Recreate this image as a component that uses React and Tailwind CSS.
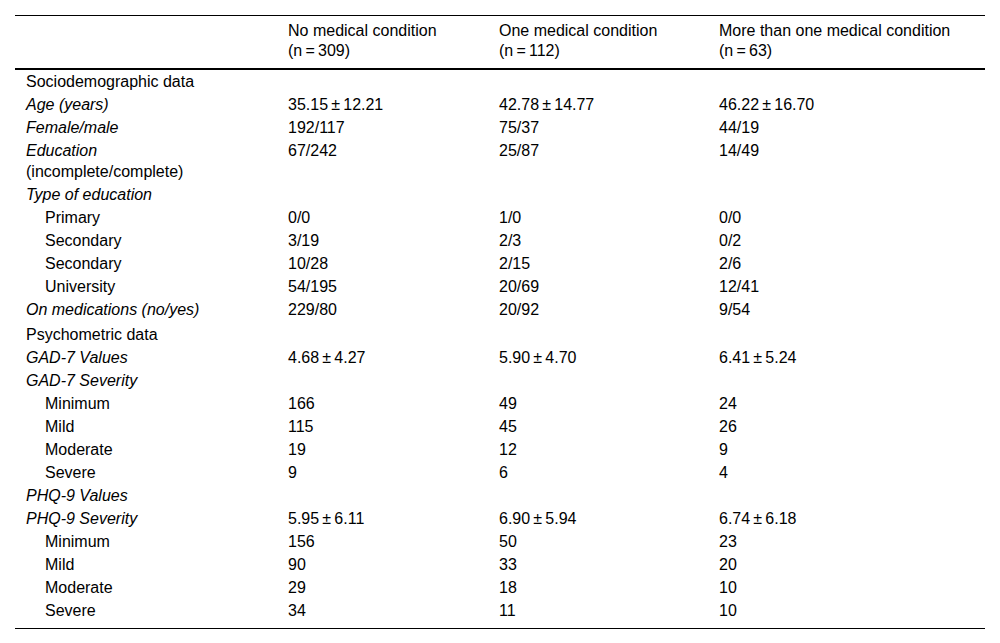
import React from "react";

// 표 데이터: [label, col1, col2, col3, 종류]
// kind: "section" = 구분 제목, "italic" = 기울임 항목, "sub" = 들여쓴 하위 항목
const pm = (a, b) => `${a}\u2009±\u2009${b}`;

const rows = [
    { label: "Sociodemographic data", kind: "section", cells: ["", "", ""] },
    { label: "Age (years)", kind: "italic", cells: [pm("35.15", "12.21"), pm("42.78", "14.77"), pm("46.22", "16.70")] },
    { label: "Female/male", kind: "italic", cells: ["192/117", "75/37", "44/19"] },
    { label: "Education", extra: "(incomplete/complete)", kind: "italic", cells: ["67/242", "25/87", "14/49"] },
    { label: "Type of education", kind: "italic", cells: ["", "", ""] },
    { label: "Primary", kind: "sub", cells: ["0/0", "1/0", "0/0"] },
    { label: "Secondary", kind: "sub", cells: ["3/19", "2/3", "0/2"] },
    { label: "Secondary", kind: "sub", cells: ["10/28", "2/15", "2/6"] },
    { label: "University", kind: "sub", cells: ["54/195", "20/69", "12/41"] },
    { label: "On medications (no/yes)", kind: "italic", cells: ["229/80", "20/92", "9/54"] },
    { label: "Psychometric data", kind: "section", gap: true, cells: ["", "", ""] },
    { label: "GAD-7 Values", kind: "italic", cells: [pm("4.68", "4.27"), pm("5.90", "4.70"), pm("6.41", "5.24")] },
    { label: "GAD-7 Severity", kind: "italic", cells: ["", "", ""] },
    { label: "Minimum", kind: "sub", cells: ["166", "49", "24"] },
    { label: "Mild", kind: "sub", cells: ["115", "45", "26"] },
    { label: "Moderate", kind: "sub", cells: ["19", "12", "9"] },
    { label: "Severe", kind: "sub", cells: ["9", "6", "4"] },
    { label: "PHQ-9 Values", kind: "italic", cells: ["", "", ""] },
    { label: "PHQ-9 Severity", kind: "italic", cells: [pm("5.95", "6.11"), pm("6.90", "5.94"), pm("6.74", "6.18")] },
    { label: "Minimum", kind: "sub", cells: ["156", "50", "23"] },
    { label: "Mild", kind: "sub", cells: ["90", "33", "20"] },
    { label: "Moderate", kind: "sub", cells: ["29", "18", "10"] },
    { label: "Severe", kind: "sub", cells: ["34", "11", "10"] },
];

const headers = [
    ["No medical condition", "(n\u2009=\u2009309)"],
    ["One medical condition", "(n\u2009=\u2009112)"],
    ["More than one medical condition", "(n\u2009=\u200963)"],
];

const App = () => {
    return (
        <div className="bg-white w-[1000px] h-[643px] p-[15px] text-black text-[16px] font-['Liberation_Sans',Arial,sans-serif]">
            <table className="w-[970px] border-collapse table-fixed">
                <colgroup>
                    <col className="w-[262px]" />
                    <col className="w-[211px]" />
                    <col className="w-[220px]" />
                    <col className="w-[277px]" />
                </colgroup>
                {/* 헤더 */}
                <thead>
                    <tr className="border-t border-black border-b-2">
                        <th className="pl-[11px] pt-[5px] pb-[7px]"></th>
                        {headers.map((h, i) => (
                            <th key={i} className="pl-[11px] pt-[5px] pb-[7px] text-left font-normal align-top leading-[20px]">
                                <div>{h[0]}</div>
                                <div>{h[1]}</div>
                            </th>
                        ))}
                    </tr>
                </thead>
                <tbody>
                    {rows.map((r, i) => {
                        const last = i === rows.length - 1;
                        const pad = `${r.gap ? "pt-[3px]" : "pt-[1px]"} ${last ? "pb-[7px]" : "pb-[1px]"}`;
                        return (
                            <tr key={i} className={last ? "border-b border-black" : ""}>
                                <td
                                    className={`${pad} align-top leading-[21px] ${r.kind === "sub" ? "pl-[30px]" : "pl-[11px]"}`}
                                >
                                    <div className={r.kind === "italic" ? "italic" : ""}>{r.label}</div>
                                    {r.extra && <div>{r.extra}</div>}
                                </td>
                                {r.cells.map((c, j) => (
                                    <td key={j} className={`${pad} pl-[11px] align-top leading-[21px] whitespace-nowrap`}>
                                        {c}
                                    </td>
                                ))}
                            </tr>
                        );
                    })}
                </tbody>
            </table>
        </div>
    );
};

export default App;
